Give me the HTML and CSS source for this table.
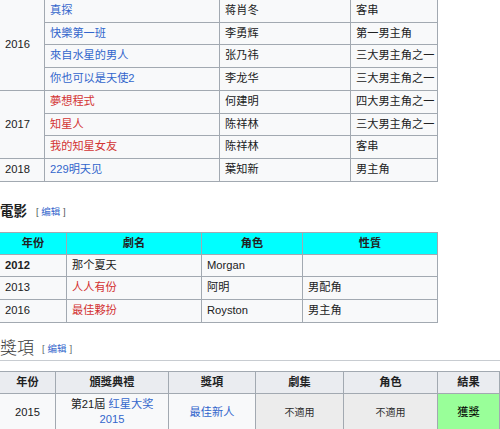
FILE: index.html
```html
<!DOCTYPE html>
<html lang="zh">
<head>
<meta charset="utf-8">
<title>作品</title>
<link rel="stylesheet" href="styles.css">
</head>
<body>
<table class="wt tv">
  <colgroup><col class="c1"><col class="c2"><col class="c3"><col class="c4"></colgroup>
  <tbody>
    <tr><td rowspan="4">2016</td><td><a class="blue">真探</a></td><td>蒋肖冬</td><td>客串</td></tr>
    <tr><td><a class="blue">快樂第一班</a></td><td>李勇辉</td><td>第一男主角</td></tr>
    <tr><td><a class="blue">來自水星的男人</a></td><td>张乃祎</td><td>三大男主角之一</td></tr>
    <tr><td><a class="blue">你也可以是天使2</a></td><td>李龙华</td><td>三大男主角之一</td></tr>
    <tr><td rowspan="3">2017</td><td><a class="red">夢想程式</a></td><td>何建明</td><td>四大男主角之一</td></tr>
    <tr><td><a class="red">知星人</a></td><td>陈祥林</td><td>三大男主角之一</td></tr>
    <tr><td><a class="red">我的知星女友</a></td><td>陈祥林</td><td>客串</td></tr>
    <tr><td>2018</td><td><a class="blue">229明天见</a></td><td>葉知新</td><td>男主角</td></tr>
  </tbody>
</table>

<h3 class="h3">電影<span class="edit">[ <a class="blue">编辑</a> ]</span></h3>

<table class="wt film">
  <colgroup><col class="f1"><col class="f2"><col class="f3"><col class="f4"></colgroup>
  <thead>
    <tr><th>年份</th><th>劇名</th><th>角色</th><th>性質</th></tr>
  </thead>
  <tbody>
    <tr><td><b>2012</b></td><td>那个夏天</td><td>Morgan</td><td></td></tr>
    <tr><td>2013</td><td><a class="red">人人有份</a></td><td>阿明</td><td>男配角</td></tr>
    <tr><td>2016</td><td><a class="red">最佳夥扮</a></td><td>Royston</td><td>男主角</td></tr>
  </tbody>
</table>

<h2 class="h2">獎項<span class="edit">[ <a class="blue">编辑</a> ]</span></h2>

<table class="wt awards">
  <colgroup><col class="a1"><col class="a2"><col class="a3"><col class="a4"><col class="a5"><col class="a6"></colgroup>
  <thead>
    <tr><th>年份</th><th>頒獎典禮</th><th>獎項</th><th>劇集</th><th>角色</th><th>結果</th></tr>
  </thead>
  <tbody>
    <tr><td>2015</td><td>第21屆 <a class="blue">红星大奖<br>2015</a></td><td><a class="blue">最佳新人</a></td><td class="na">不適用</td><td class="na">不適用</td><td class="won">獲獎</td></tr>
  </tbody>
</table>
</body>
</html>
```
FILE: styles.css
```css
html, body {
  margin: 0;
  padding: 0;
  background: #ffffff;
}
body {
  font-family: "Liberation Sans", "Noto Sans CJK SC", sans-serif;
  font-size: 11.2px;
  color: #202122;
  overflow: hidden;
}
a { text-decoration: none; cursor: pointer; }
.blue { color: #3366cc; }
.red { color: #d33333; }

.wt {
  border-collapse: collapse;
  table-layout: fixed;
  background: #f8f9fa;
  margin-left: -1px;
}
.wt td, .wt th {
  border: 1px solid #a2a9b1;
  padding: 3px 5px;
  line-height: 15.7px;
  text-align: left;
  vertical-align: middle;
  white-space: nowrap;
  overflow: hidden;
}
.wt th {
  font-weight: bold;
  text-align: center;
}

.tv { width: 438px; margin-top: -1px; }
.c1 { width: 45px; }
.c2 { width: 175px; }
.c3 { width: 131px; }
.c4 { width: 87px; }

.h3 {
  margin: 20px 0 10px 0;
  font-size: 13.5px;
  line-height: 20px;
  font-weight: bold;
  color: #202122;
  font-family: "Liberation Sans", "Noto Sans CJK SC", sans-serif;
}
.edit {
  font-size: 9.5px;
  font-weight: normal;
  color: #54595d;
  margin-left: 9px;
  vertical-align: 1px;
}
.h2 .edit { margin-left: 8px; vertical-align: 2px; }

.film { width: 438px; }
.film th { background: #00ffff; line-height: 15px; }
.f1 { width: 67px; }
.f2 { width: 135px; }
.f3 { width: 101px; }
.f4 { width: 135px; }

.h2 {
  margin: 16px 0 10px 0;
  padding-bottom: 1px;
  font-family: "Liberation Serif", "Noto Sans CJK SC", serif;
  font-size: 17px;
  font-weight: 300;
  line-height: 20px;
  color: #3a3a3a;
  border-bottom: 1px solid #c8ccd1;
}

.awards { width: 500px; }
.awards th { background: #eaecf0; line-height: 15px; }
.awards td { text-align: center; white-space: normal; }
.awards td.na { background: #ececec; color: #2c2c2c; font-size: 10px; }
.awards td.won { background: #99ff99; color: #000; }
.a1 { width: 56px; }
.a2 { width: 113px; }
.a3 { width: 87px; }
.a4 { width: 88px; }
.a5 { width: 94px; }
.a6 { width: 62px; }
```
